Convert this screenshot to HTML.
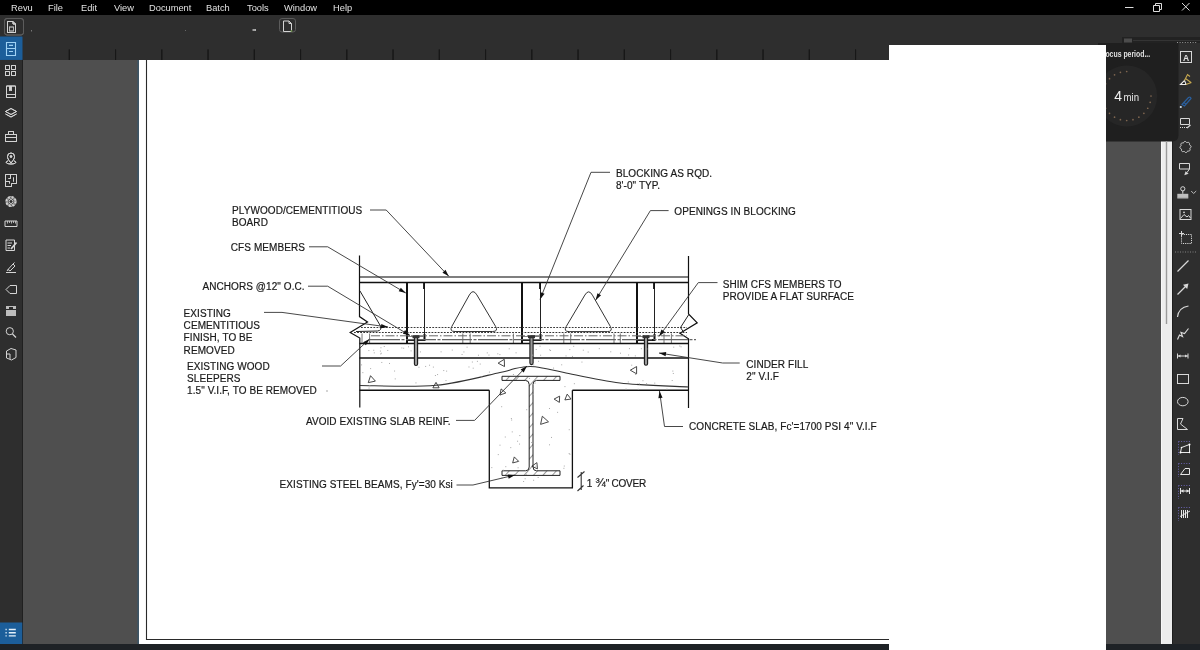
<!DOCTYPE html>
<html><head><meta charset="utf-8">
<style>
*{margin:0;padding:0;box-sizing:border-box}
html,body{width:1200px;height:650px;overflow:hidden;background:#4f4f4f;font-family:"Liberation Sans",sans-serif}
.a{position:absolute}
#menu{left:0;top:0;width:1200px;height:15px;background:#000;color:#e2e2e2;font-size:9.3px}
#menu span{position:absolute;top:3px;line-height:11px}
#tool{left:0;top:15px;width:1200px;height:45px;background:#2e2e2e}
#lside{left:0;top:60px;width:22.5px;height:584px;background:#2e2e2e;border-right:1px solid #202020}
#page{left:139px;top:60px;width:750px;height:584px;background:#fff}
#bot{left:0;top:644px;width:1200px;height:6px;background:#1e2226}
#white{left:889px;top:45px;width:217px;height:605px;background:#fff}
#rtool{left:1172px;top:45px;width:28px;height:599px;background:#2e2e2e;border-left:1px solid #1e1e1e}
#scr{left:1161px;top:141px;width:11px;height:503px;background:#ededed;border-left:1px solid #f8f8f8}
#focus{left:1098px;top:43px;width:81px;height:99px;background:#1f1f1f;border-radius:0 0 7px 0}
#dr{left:0;top:0;will-change:transform}
</style></head><body>
<div class="a" id="tool"></div>
<div class="a" id="lside"></div>
<div class="a" id="page"></div>
<svg class="a" id="dr" width="1200" height="650" viewBox="0 0 1200 650">
<path d="M146.5,60 V639.5 H889" fill="none" stroke="#2a2a2a" stroke-width="1.1"/>
<path d="M359.5,277 H688.5" stroke="#555" stroke-width="1.4"/>
<path d="M359.5,282.5 H688.5" stroke="#111" stroke-width="1.3"/>
<path d="M359.5,255.5 V316.6 L367.5,322 L350.2,332.5 L359.8,338 V407.5" fill="none" stroke="#111" stroke-width="1.2"/>
<path d="M688.5,256 V314 L697.2,322.8 L680,333.2 L688.5,338.8 V408" fill="none" stroke="#111" stroke-width="1.2"/>
<path d="M407,282.5 V343 M407,340 H424.5 V334" fill="none" stroke="#111" stroke-width="2"/>
<path d="M424.5,283 V336" fill="none" stroke="#222" stroke-width="1"/>
<path d="M424,283 V289" fill="none" stroke="#111" stroke-width="1.8"/>
<path d="M408,336.5 H423.5" fill="none" stroke="#666" stroke-width="0.8"/>
<path d="M522,282.5 V343 M522,340 H540.5 V334" fill="none" stroke="#111" stroke-width="2"/>
<path d="M540.5,283 V336" fill="none" stroke="#222" stroke-width="1"/>
<path d="M540,283 V289" fill="none" stroke="#111" stroke-width="1.8"/>
<path d="M523,336.5 H539.5" fill="none" stroke="#666" stroke-width="0.8"/>
<path d="M637,282.5 V343 M637,340 H654.5 V334" fill="none" stroke="#111" stroke-width="2"/>
<path d="M654.5,283 V336" fill="none" stroke="#222" stroke-width="1"/>
<path d="M654,283 V289" fill="none" stroke="#111" stroke-width="1.8"/>
<path d="M638,336.5 H653.5" fill="none" stroke="#666" stroke-width="0.8"/>
<path d="M469.35,294.95 Q473,288.4 476.83,294.85 L495.54,326.34 Q498.6,331.5 492.6,331.5 L455,331.5 Q449,331.5 451.92,326.26 Z" fill="none" stroke="#333" stroke-width="1"/>
<path d="M584.87,295.05 Q588.7,288.6 592.42,295.11 L610.32,326.39 Q613.3,331.6 607.3,331.6 L569.2,331.6 Q563.2,331.6 566.26,326.44 Z" fill="none" stroke="#333" stroke-width="1"/>
<path d="M361,327.5 H687" stroke="#3a3a3a" stroke-width="1" stroke-dasharray="1.8 1.3"/>
<path d="M354,332.5 H687" stroke="#333" stroke-width="1.1" stroke-dasharray="1.8 1.3"/>
<path d="M688.5,315 L680.5,327.5 L683.5,332" fill="none" stroke="#222" stroke-width="1"/>
<path d="M360,291 L380.5,326 Q382,330.5 377.5,331 L356,331.5" fill="none" stroke="#222" stroke-width="1"/>
<path d="M362,333.5 V343" stroke="#777" stroke-width="1"/>
<path d="M369.6,333.5 V343" stroke="#777" stroke-width="1"/>
<path d="M462.8,333.5 V343" stroke="#777" stroke-width="1"/>
<path d="M470.2,333.5 V343" stroke="#777" stroke-width="1"/>
<path d="M513.4,333.5 V343" stroke="#777" stroke-width="1"/>
<path d="M563.8,333.5 V343" stroke="#777" stroke-width="1"/>
<path d="M570.7,333.5 V343" stroke="#777" stroke-width="1"/>
<path d="M614,333.5 V343" stroke="#777" stroke-width="1"/>
<path d="M620.3,333.5 V343" stroke="#777" stroke-width="1"/>
<path d="M664,333.5 V343" stroke="#777" stroke-width="1"/>
<path d="M671.4,333.5 V343" stroke="#777" stroke-width="1"/>
<path d="M371,335.8 H687" stroke="#666" stroke-width="1" stroke-dasharray="9 2 1.5 2"/>
<path d="M370,339.6 H696" stroke="#666" stroke-width="1.2" stroke-dasharray="30 1.5 3 1.5"/>
<path d="M359.5,343.5 H688.5" stroke="#111" stroke-width="1.5"/>
<path d="M359.5,358 H688.5" stroke="#111" stroke-width="1.5"/>
<path d="M359.5,390.2 H489.3 M572.4,390.2 H688.5" stroke="#111" stroke-width="1.4"/>
<path d="M489.3,390.2 V487.8 H572.4 V390.2" fill="none" stroke="#111" stroke-width="1.3"/>
<path d="M359.5,385.5 C372.25,385.47 412.58,387.47 436,385.3 C459.42,383.13 486.83,375.3 500,372.5 C513.17,369.7 510,369.5 515,368.5 C520,367.5 525,366.5 530,366.5 C535,366.5 539.33,367.5 545,368.5 C550.67,369.5 551.5,370.08 564,372.5 C576.5,374.92 599.25,380.58 620,383 C640.75,385.42 677.08,386.33 688.5,387" fill="none" stroke="#333" stroke-width="1.1"/>
<defs><pattern id="h" width="7" height="7" patternUnits="userSpaceOnUse" patternTransform="rotate(42)"><rect width="7" height="7" fill="#fff"/><path d="M0,0 V7" stroke="#555" stroke-width="1.2"/></pattern></defs>
<path d="M502,376.3 H560 V380.4 H536.5 Q533,380.6 533,384.5 V467 Q533,470.8 536.5,470.8 H560 V475.4 H502 V470.8 H525.5 Q529.2,470.8 529.2,467 V384.5 Q529.2,380.6 525.5,380.4 H502 Z" fill="url(#h)" stroke="#222" stroke-width="1" stroke-linejoin="round"/>
<path d="M414.4,336.5 V364 Q414.4,365.5 416,365.5 Q417.6,365.5 417.6,364 V336.5" fill="#9a9a9a" stroke="#1a1a1a" stroke-width="1.1"/>
<rect x="412.5" y="335.2" width="7" height="3" fill="#333"/>
<path d="M529.9,336.5 V363.1 Q529.9,364.6 531.5,364.6 Q533.1,364.6 533.1,363.1 V336.5" fill="#9a9a9a" stroke="#1a1a1a" stroke-width="1.1"/>
<rect x="528" y="335.2" width="7" height="3" fill="#333"/>
<path d="M644.4,336.5 V363.7 Q644.4,365.2 646,365.2 Q647.6,365.2 647.6,363.7 V336.5" fill="#9a9a9a" stroke="#1a1a1a" stroke-width="1.1"/>
<rect x="642.5" y="335.2" width="7" height="3" fill="#333"/>
<polygon points="370.53,375.69 375.39,381.1 368.28,382.61" fill="none" stroke="#333" stroke-width="0.9"/>
<polygon points="436,382.4 439.12,387.8 432.88,387.8" fill="none" stroke="#333" stroke-width="0.9"/>
<polygon points="504.27,359.29 504.53,366.56 498.1,363.15" fill="none" stroke="#333" stroke-width="0.9"/>
<polygon points="501.07,388.92 505.85,392.93 499.99,395.06" fill="none" stroke="#333" stroke-width="0.9"/>
<polygon points="559.61,396.15 559.39,402.38 554.1,399.07" fill="none" stroke="#333" stroke-width="0.9"/>
<polygon points="567.2,394.14 571.04,399.05 564.86,399.92" fill="none" stroke="#333" stroke-width="0.9"/>
<polygon points="542.32,416.23 548.5,421.8 540.59,424.37" fill="none" stroke="#333" stroke-width="0.9"/>
<polygon points="514.27,456.92 518.68,461.33 512.65,462.95" fill="none" stroke="#333" stroke-width="0.9"/>
<polygon points="536.92,462.64 537.46,468.85 531.81,466.21" fill="none" stroke="#333" stroke-width="0.9"/>
<polygon points="636.6,366.56 636.6,373.84 630.3,370.2" fill="none" stroke="#333" stroke-width="0.9"/>
<rect x="466.57" y="346.66" width="1" height="1" fill="#aaa"/>
<rect x="573.2" y="345.8" width="1" height="1" fill="#aaa"/>
<rect x="535.7" y="349.02" width="1" height="1" fill="#aaa"/>
<rect x="379.91" y="350.58" width="1" height="1" fill="#aaa"/>
<rect x="373.22" y="349.77" width="1" height="1" fill="#aaa"/>
<rect x="383.77" y="346" width="1" height="1" fill="#aaa"/>
<rect x="499.39" y="354.1" width="1" height="1" fill="#aaa"/>
<rect x="401.36" y="347.46" width="1" height="1" fill="#aaa"/>
<rect x="565.54" y="355.42" width="1" height="1" fill="#aaa"/>
<rect x="549.14" y="349.36" width="1" height="1" fill="#aaa"/>
<rect x="679.26" y="345.51" width="1" height="1" fill="#aaa"/>
<rect x="640.86" y="348.19" width="1" height="1" fill="#aaa"/>
<rect x="408.03" y="346.3" width="1" height="1" fill="#aaa"/>
<rect x="461.57" y="353.98" width="1" height="1" fill="#aaa"/>
<rect x="419.92" y="351.4" width="1" height="1" fill="#aaa"/>
<rect x="569.29" y="349.1" width="1" height="1" fill="#aaa"/>
<rect x="539.56" y="345.69" width="1" height="1" fill="#aaa"/>
<rect x="380.43" y="347.27" width="1" height="1" fill="#aaa"/>
<rect x="582.81" y="349.7" width="1" height="1" fill="#aaa"/>
<rect x="463.41" y="351.44" width="1" height="1" fill="#aaa"/>
<rect x="508.74" y="348.3" width="1" height="1" fill="#aaa"/>
<rect x="619.97" y="352.69" width="1" height="1" fill="#aaa"/>
<rect x="440.58" y="351.32" width="1" height="1" fill="#aaa"/>
<rect x="532.21" y="354.63" width="1" height="1" fill="#aaa"/>
<rect x="598.8" y="348.17" width="1" height="1" fill="#aaa"/>
<rect x="680.54" y="346.3" width="1" height="1" fill="#aaa"/>
<rect x="497.31" y="353.33" width="1" height="1" fill="#aaa"/>
<rect x="410.55" y="350.38" width="1" height="1" fill="#aaa"/>
<rect x="373.78" y="352.35" width="1" height="1" fill="#aaa"/>
<rect x="610.25" y="351.3" width="1" height="1" fill="#aaa"/>
<rect x="646.41" y="348.45" width="1" height="1" fill="#aaa"/>
<rect x="587.67" y="351.54" width="1" height="1" fill="#aaa"/>
<rect x="550.05" y="350.02" width="1" height="1" fill="#aaa"/>
<rect x="634.83" y="355.39" width="1" height="1" fill="#aaa"/>
<rect x="515.56" y="352.31" width="1" height="1" fill="#aaa"/>
<rect x="380.78" y="352.72" width="1" height="1" fill="#aaa"/>
<rect x="571.96" y="355.92" width="1" height="1" fill="#aaa"/>
<rect x="628.95" y="348.13" width="1" height="1" fill="#aaa"/>
<rect x="486.77" y="352.36" width="1" height="1" fill="#aaa"/>
<rect x="368.36" y="350.08" width="1" height="1" fill="#aaa"/>
<rect x="415.78" y="346.29" width="1" height="1" fill="#aaa"/>
<rect x="380.22" y="353.45" width="1" height="1" fill="#aaa"/>
<rect x="403.16" y="347.72" width="1" height="1" fill="#aaa"/>
<rect x="488.45" y="354.59" width="1" height="1" fill="#aaa"/>
<rect x="387.27" y="349.94" width="1" height="1" fill="#aaa"/>
<rect x="540.12" y="354.72" width="1" height="1" fill="#aaa"/>
<rect x="628.09" y="354.5" width="1" height="1" fill="#aaa"/>
<rect x="451.77" y="349.57" width="1" height="1" fill="#aaa"/>
<rect x="477.96" y="354.73" width="1" height="1" fill="#aaa"/>
<rect x="673.22" y="346.66" width="1" height="1" fill="#aaa"/>
<rect x="418.45" y="366.73" width="1" height="1" fill="#aaa"/>
<rect x="437.07" y="374.06" width="1" height="1" fill="#aaa"/>
<rect x="553.05" y="367.62" width="1" height="1" fill="#aaa"/>
<rect x="362.33" y="372.15" width="1" height="1" fill="#aaa"/>
<rect x="481.38" y="376.42" width="1" height="1" fill="#aaa"/>
<rect x="671.71" y="380.02" width="1" height="1" fill="#aaa"/>
<rect x="529.05" y="377.91" width="1" height="1" fill="#aaa"/>
<rect x="581.44" y="361.57" width="1" height="1" fill="#aaa"/>
<rect x="654.25" y="382.62" width="1" height="1" fill="#aaa"/>
<rect x="646.09" y="383.14" width="1" height="1" fill="#aaa"/>
<rect x="488.92" y="371.57" width="1" height="1" fill="#aaa"/>
<rect x="394.75" y="378.39" width="1" height="1" fill="#aaa"/>
<rect x="381.29" y="361.95" width="1" height="1" fill="#aaa"/>
<rect x="429.06" y="364.71" width="1" height="1" fill="#aaa"/>
<rect x="471.86" y="361.52" width="1" height="1" fill="#aaa"/>
<rect x="361.08" y="364.39" width="1" height="1" fill="#aaa"/>
<rect x="394.08" y="370.54" width="1" height="1" fill="#aaa"/>
<rect x="369.31" y="385.36" width="1" height="1" fill="#aaa"/>
<rect x="561.19" y="364.31" width="1" height="1" fill="#aaa"/>
<rect x="443.24" y="370.07" width="1" height="1" fill="#aaa"/>
<rect x="479.72" y="363.56" width="1" height="1" fill="#aaa"/>
<rect x="637.75" y="388.8" width="1" height="1" fill="#aaa"/>
<rect x="512.91" y="374.03" width="1" height="1" fill="#aaa"/>
<rect x="389" y="362.96" width="1" height="1" fill="#aaa"/>
<rect x="472.7" y="367.68" width="1" height="1" fill="#aaa"/>
<rect x="631.21" y="364.68" width="1" height="1" fill="#aaa"/>
<rect x="368.53" y="387.58" width="1" height="1" fill="#aaa"/>
<rect x="533.21" y="364.25" width="1" height="1" fill="#aaa"/>
<rect x="538.07" y="360.78" width="1" height="1" fill="#aaa"/>
<rect x="533.16" y="388.38" width="1" height="1" fill="#aaa"/>
<rect x="642.44" y="380.19" width="1" height="1" fill="#aaa"/>
<rect x="446.12" y="370.63" width="1" height="1" fill="#aaa"/>
<rect x="415.46" y="382.39" width="1" height="1" fill="#aaa"/>
<rect x="534.63" y="382.59" width="1" height="1" fill="#aaa"/>
<rect x="468.47" y="366.47" width="1" height="1" fill="#aaa"/>
<rect x="625.55" y="388.56" width="1" height="1" fill="#aaa"/>
<rect x="638.96" y="383.38" width="1" height="1" fill="#aaa"/>
<rect x="627.78" y="381.46" width="1" height="1" fill="#aaa"/>
<rect x="434.92" y="375.01" width="1" height="1" fill="#aaa"/>
<rect x="476.91" y="360.84" width="1" height="1" fill="#aaa"/>
<rect x="370.11" y="368.1" width="1" height="1" fill="#aaa"/>
<rect x="445.49" y="380.08" width="1" height="1" fill="#aaa"/>
<rect x="672.82" y="372.97" width="1" height="1" fill="#aaa"/>
<rect x="666.47" y="388.65" width="1" height="1" fill="#aaa"/>
<rect x="672.33" y="370.57" width="1" height="1" fill="#aaa"/>
<rect x="432.87" y="366.58" width="1" height="1" fill="#aaa"/>
<rect x="425.13" y="365.93" width="1" height="1" fill="#aaa"/>
<rect x="564.45" y="386.11" width="1" height="1" fill="#aaa"/>
<rect x="634.98" y="373.9" width="1" height="1" fill="#aaa"/>
<rect x="573.87" y="383.19" width="1" height="1" fill="#aaa"/>
<rect x="497.78" y="454.1" width="1" height="1" fill="#aaa"/>
<rect x="563.78" y="465.54" width="1" height="1" fill="#aaa"/>
<rect x="551.01" y="436.94" width="1" height="1" fill="#aaa"/>
<rect x="505.28" y="466.18" width="1" height="1" fill="#aaa"/>
<rect x="517.6" y="467.28" width="1" height="1" fill="#aaa"/>
<rect x="568.73" y="429.21" width="1" height="1" fill="#aaa"/>
<rect x="523.11" y="481" width="1" height="1" fill="#aaa"/>
<rect x="548.98" y="407.98" width="1" height="1" fill="#aaa"/>
<rect x="501.16" y="406.21" width="1" height="1" fill="#aaa"/>
<rect x="563.39" y="467.81" width="1" height="1" fill="#aaa"/>
<rect x="502.69" y="469.69" width="1" height="1" fill="#aaa"/>
<rect x="569.42" y="453.78" width="1" height="1" fill="#aaa"/>
<rect x="519.03" y="443.57" width="1" height="1" fill="#aaa"/>
<rect x="501.48" y="393.34" width="1" height="1" fill="#aaa"/>
<rect x="568.67" y="453.07" width="1" height="1" fill="#aaa"/>
<rect x="533.13" y="479.76" width="1" height="1" fill="#aaa"/>
<rect x="525.7" y="473.94" width="1" height="1" fill="#aaa"/>
<rect x="557.09" y="411.84" width="1" height="1" fill="#aaa"/>
<rect x="511.15" y="419.54" width="1" height="1" fill="#aaa"/>
<rect x="510.24" y="447.13" width="1" height="1" fill="#aaa"/>
<rect x="511.75" y="431.39" width="1" height="1" fill="#aaa"/>
<rect x="501.49" y="477.54" width="1" height="1" fill="#aaa"/>
<rect x="519.3" y="435.07" width="1" height="1" fill="#aaa"/>
<rect x="537.67" y="477" width="1" height="1" fill="#aaa"/>
<rect x="524.65" y="478.27" width="1" height="1" fill="#aaa"/>
<rect x="531.13" y="441.99" width="1" height="1" fill="#aaa"/>
<rect x="532.88" y="393.76" width="1" height="1" fill="#aaa"/>
<rect x="526.21" y="409.21" width="1" height="1" fill="#aaa"/>
<rect x="491.31" y="467.12" width="1" height="1" fill="#aaa"/>
<rect x="504.79" y="436.51" width="1" height="1" fill="#aaa"/>
<rect x="549.02" y="444.31" width="1" height="1" fill="#aaa"/>
<rect x="517.08" y="440.72" width="1" height="1" fill="#aaa"/>
<rect x="535.44" y="465.72" width="1" height="1" fill="#aaa"/>
<rect x="499.49" y="444.67" width="1" height="1" fill="#aaa"/>
<rect x="510.88" y="418.03" width="1" height="1" fill="#aaa"/>
<path d="M370,210 L386.2,210 L448.8,276.3" fill="none" stroke="#333" stroke-width="0.9"/>
<polygon points="448.8,276.3 442.47,272.65 445.52,269.77" fill="#111"/>
<path d="M309,246.8 L327.7,246.8 L405.8,293" fill="none" stroke="#333" stroke-width="0.9"/>
<polygon points="405.8,293 398.71,291.24 400.84,287.63" fill="#111"/>
<path d="M308,286.2 L327.7,286.2 L410,335.5" fill="none" stroke="#333" stroke-width="0.9"/>
<polygon points="410,335.5 402.92,333.7 405.07,330.1" fill="#111"/>
<path d="M264,312.4 L282,312.4 L388,327" fill="none" stroke="#333" stroke-width="0.9"/>
<polygon points="388,327 380.78,328.13 381.35,323.96" fill="#111"/>
<path d="M322,366 L340.6,366 L369.6,339" fill="none" stroke="#333" stroke-width="0.9"/>
<polygon points="369.6,339 365.91,345.31 363.05,342.23" fill="#111"/>
<path d="M610,172.3 L591,172.3 L540,299.5" fill="none" stroke="#333" stroke-width="0.9"/>
<polygon points="540,299.5 540.66,292.22 544.55,293.78" fill="#111"/>
<path d="M668.6,210.6 L650.4,210.6 L595.6,300.2" fill="none" stroke="#333" stroke-width="0.9"/>
<polygon points="595.6,300.2 597.46,293.13 601.04,295.32" fill="#111"/>
<path d="M717.5,282.6 L698.3,282.6 L659,336.5" fill="none" stroke="#333" stroke-width="0.9"/>
<polygon points="659,336.5 661.43,329.61 664.82,332.08" fill="#111"/>
<path d="M739.7,363 L722.7,363 L659,353" fill="none" stroke="#333" stroke-width="0.9"/>
<polygon points="659,353 666.24,352.01 665.59,356.16" fill="#111"/>
<path d="M683,426.5 L664.5,426.5 L659.5,391" fill="none" stroke="#333" stroke-width="0.9"/>
<polygon points="659.5,391 662.56,397.64 658.4,398.22" fill="#111"/>
<path d="M456,420.4 L474.6,420.4 L527,366" fill="none" stroke="#333" stroke-width="0.9"/>
<polygon points="527,366 523.66,372.5 520.63,369.58" fill="#111"/>
<path d="M456.5,485 L473,485 L515,475" fill="none" stroke="#333" stroke-width="0.9"/>
<polygon points="515,475 508.68,478.66 507.7,474.58" fill="#111"/>
<path d="M581.2,472 V490 M577.5,477.5 L584.5,471.5 M577.5,491 L583.5,485.5" fill="none" stroke="#333" stroke-width="1.1"/>
<g font-family="Liberation Sans" font-size="10" letter-spacing="0.08" fill="#1a1a1a" stroke="#1a1a1a" stroke-width="0.2"><text x="232" y="214.3">PLYWOOD/CEMENTITIOUS</text><text x="232" y="226.4">BOARD</text><text x="230.8" y="251.1">CFS MEMBERS</text><text x="202.4" y="289.6">ANCHORS @12&quot; O.C.</text><text x="183.6" y="317">EXISTING</text><text x="183.6" y="329.2">CEMENTITIOUS</text><text x="183.6" y="341.4">FINISH, TO BE</text><text x="183.6" y="353.6">REMOVED</text><text x="187" y="369.6">EXISTING WOOD</text><text x="187" y="381.8">SLEEPERS</text><text x="187" y="394">1.5&quot; V.I.F, TO BE REMOVED</text><text x="615.9" y="177.1">BLOCKING AS RQD.</text><text x="615.9" y="189.2">8'-0&quot; TYP.</text><text x="674.3" y="215">OPENINGS IN BLOCKING</text><text x="722.7" y="287.6">SHIM CFS MEMBERS TO</text><text x="722.7" y="300.1">PROVIDE A FLAT SURFACE</text><text x="746.3" y="367.6">CINDER FILL</text><text x="746.3" y="379.8">2&quot; V.I.F</text><text x="689" y="429.6">CONCRETE SLAB, Fc'=1700 PSI 4&quot; V.I.F</text><text x="305.9" y="424.9">AVOID EXISTING SLAB REINF.</text><text x="279.6" y="488.4">EXISTING STEEL BEAMS, Fy'=30 Ksi</text><text x="586.8" y="487">1 <tspan font-size="12.5" letter-spacing="0">&#190;</tspan><tspan letter-spacing="-0.25">&quot; COVER</tspan></text></g>
<rect x="326.5" y="390.5" width="1" height="1" fill="#555"/>
</svg>
<div class="a" id="bot"></div>
<div class="a" id="scr"></div>
<div class="a" id="rtool"></div>
<svg class="a" style="left:0;top:0" width="1200" height="650" viewBox="0 0 1200 650"><path d="M1098,43 H1178.5 V135 Q1178.5,141.5 1172,141.5 H1098 Z" fill="#1f1f1f"/>
<text x="1150.2" y="57" font-family="Liberation Sans" font-size="8.6" font-weight="bold" fill="#e0e0e0" text-anchor="end" textLength="49" lengthAdjust="spacingAndGlyphs">Focus period...</text>
<circle cx="1126.7" cy="96" r="30.5" fill="#262626"/>
<circle cx="1151" cy="96" r="0.85" fill="#7f6650"/>
<circle cx="1150.17" cy="102.34" r="0.85" fill="#7f6650"/>
<circle cx="1147.74" cy="108.25" r="0.85" fill="#7f6650"/>
<circle cx="1143.88" cy="113.32" r="0.85" fill="#7f6650"/>
<circle cx="1138.85" cy="117.22" r="0.85" fill="#7f6650"/>
<circle cx="1132.99" cy="119.67" r="0.85" fill="#7f6650"/>
<circle cx="1126.7" cy="120.5" r="0.85" fill="#7f6650"/>
<circle cx="1120.41" cy="119.67" r="0.85" fill="#7f6650"/>
<circle cx="1114.55" cy="117.22" r="0.85" fill="#7f6650"/>
<circle cx="1109.52" cy="113.32" r="0.85" fill="#7f6650"/>
<circle cx="1105.66" cy="108.25" r="0.85" fill="#7f6650"/>
<circle cx="1103.23" cy="102.34" r="0.85" fill="#7f6650"/>
<circle cx="1102.4" cy="96" r="0.85" fill="#7f6650"/>
<circle cx="1103.23" cy="89.66" r="0.85" fill="#7f6650"/>
<circle cx="1105.66" cy="83.75" r="0.85" fill="#7f6650"/>
<circle cx="1109.52" cy="78.68" r="0.85" fill="#7f6650"/>
<circle cx="1114.55" cy="74.78" r="0.85" fill="#7f6650"/>
<circle cx="1120.41" cy="72.33" r="0.85" fill="#7f6650"/>
<circle cx="1126.7" cy="71.5" r="0.85" fill="#7f6650"/>
<text x="1114.3" y="100.5" font-family="Liberation Sans" font-size="14" fill="#f2f2f2">4</text>
<text x="1123.5" y="100.5" font-family="Liberation Sans" font-size="11" fill="#e6e6e6" textLength="15.5" lengthAdjust="spacingAndGlyphs">min</text></svg>
<div class="a" id="white"></div>
<svg class="a" style="left:0;top:0;z-index:5" width="1200" height="650" viewBox="0 0 1200 650"><path d="M69.3,49.5 V60" stroke="#181818" stroke-width="1"/>
<path d="M115.55,49.5 V60" stroke="#181818" stroke-width="1"/>
<path d="M161.8,49.5 V60" stroke="#181818" stroke-width="1"/>
<path d="M208.05,49.5 V60" stroke="#181818" stroke-width="1"/>
<path d="M254.3,49.5 V60" stroke="#181818" stroke-width="1"/>
<path d="M300.55,49.5 V60" stroke="#181818" stroke-width="1"/>
<path d="M346.8,49.5 V60" stroke="#181818" stroke-width="1"/>
<path d="M393.05,49.5 V60" stroke="#181818" stroke-width="1"/>
<path d="M439.3,49.5 V60" stroke="#181818" stroke-width="1"/>
<path d="M485.55,49.5 V60" stroke="#181818" stroke-width="1"/>
<path d="M531.8,49.5 V60" stroke="#181818" stroke-width="1"/>
<path d="M578.05,49.5 V60" stroke="#181818" stroke-width="1"/>
<path d="M624.3,49.5 V60" stroke="#181818" stroke-width="1"/>
<path d="M670.55,49.5 V60" stroke="#181818" stroke-width="1"/>
<path d="M716.8,49.5 V60" stroke="#181818" stroke-width="1"/>
<path d="M763.05,49.5 V60" stroke="#181818" stroke-width="1"/>
<path d="M809.3,49.5 V60" stroke="#181818" stroke-width="1"/>
<path d="M855.55,49.5 V60" stroke="#181818" stroke-width="1"/>
<rect x="137.6" y="60" width="1.4" height="584" fill="#3d5566"/>
<rect x="4.5" y="18.5" width="19" height="16.5" rx="2.5" fill="none" stroke="#5c5c5c" stroke-width="1"/>
<path d="M7.5,21.5 H13 L15.5,24 V32.5 H7.5 Z M13,21.5 V24 H15.5" fill="none" stroke="#d4d4d4" stroke-width="1"/>
<rect x="9.5" y="27" width="4" height="4" fill="none" stroke="#bbb" stroke-width="0.8"/>
<rect x="0" y="36.7" width="22.3" height="23.1" fill="#1c5e9a"/>
<path d="M6.5,42.5 H15.5 V55.5 H6.5 Z M6.5,48.5 H15.5" fill="none" stroke="#9fd2f5" stroke-width="1.1"/>
<path d="M9,45.3 H13 M9,51.5 H13" stroke="#9fd2f5" stroke-width="1.2"/>
<path d="M5.5,65.5 h4 v4 h-4 Z M11.5,65.5 h4 v4 h-4 Z M5.5,71.5 h4 v4 h-4 Z M11.5,71.5 h4 v4 h-4 Z" fill="none" stroke="#d4d4d4" stroke-width="1"/>
<path d="M6.5,86 H15.5 V97.5 H6.5 Z M6.5,94.5 H15.5" fill="none" stroke="#d4d4d4" stroke-width="1"/><path d="M9.5,86 V91 L10.5,90 L11.5,91 V86" fill="#d4d4d4" stroke="#d4d4d4" stroke-width="0.6"/>
<path d="M11,108.5 L16.5,111.5 L11,114.5 L5.5,111.5 Z M5.5,114 L11,117 L16.5,114" fill="none" stroke="#d4d4d4" stroke-width="1"/>
<path d="M5.5,134.5 H16.5 V141.5 H5.5 Z M8.5,134.5 V131.5 H13.5 V134.5 M5.5,137.5 H16.5" fill="none" stroke="#d4d4d4" stroke-width="1"/>
<path d="M11,163 C8,159.5 7.5,158 7.5,156.5 A3.5,3.5 0 0 1 14.5,156.5 C14.5,158 14,159.5 11,163 Z M8,161 C5,161.5 5.5,164 11,164 C16.5,164 17,161.5 14,161" fill="none" stroke="#d4d4d4" stroke-width="1"/><circle cx="11" cy="156.5" r="1.2" fill="#d4d4d4"/>
<path d="M5.5,174.5 H16.5 V183.5 H11.5 V186.5 H5.5 Z M10.5,174.5 V178.5 H8.5 M13.5,177.5 V181.5 M5.5,181.5 H9.5 V183.5" fill="none" stroke="#d4d4d4" stroke-width="1"/>
<polygon points="15.92,201.5 15.76,201.81 15.53,202.1 15.24,202.34 14.91,202.55 14.83,202.8 14.99,203.15 15.1,203.52 15.13,203.89 15.09,204.23 14.96,204.54 14.75,204.79 14.48,204.98 14.15,205.09 13.78,205.13 13.4,205.09 13.02,205 12.79,205.13 12.65,205.49 12.47,205.83 12.24,206.11 11.96,206.32 11.65,206.45 11.33,206.48 11,206.42 10.69,206.26 10.4,206.03 10.16,205.74 9.95,205.41 9.7,205.33 9.35,205.49 8.98,205.6 8.61,205.63 8.27,205.59 7.96,205.46 7.71,205.25 7.52,204.98 7.41,204.65 7.37,204.28 7.41,203.9 7.5,203.52 7.37,203.29 7.01,203.15 6.67,202.97 6.39,202.74 6.18,202.46 6.05,202.15 6.02,201.83 6.08,201.5 6.24,201.19 6.47,200.9 6.76,200.66 7.09,200.45 7.17,200.2 7.01,199.85 6.9,199.48 6.87,199.11 6.91,198.77 7.04,198.46 7.25,198.21 7.52,198.02 7.85,197.91 8.22,197.87 8.6,197.91 8.98,198 9.21,197.87 9.35,197.51 9.53,197.17 9.76,196.89 10.04,196.68 10.35,196.55 10.67,196.52 11,196.58 11.31,196.74 11.6,196.97 11.84,197.26 12.05,197.59 12.3,197.67 12.65,197.51 13.02,197.4 13.39,197.37 13.73,197.41 14.04,197.54 14.29,197.75 14.48,198.02 14.59,198.35 14.63,198.72 14.59,199.1 14.5,199.48 14.63,199.71 14.99,199.85 15.33,200.03 15.61,200.26 15.82,200.54 15.95,200.85 15.98,201.17 15.92,201.5" fill="none" stroke="#d4d4d4" stroke-width="1"/>
<circle cx="11" cy="201.5" r="2" fill="none" stroke="#d4d4d4" stroke-width="1"/>
<path d="M69.3,49.5 V60" stroke="#181818" stroke-width="1"/>
<path d="M115.55,49.5 V60" stroke="#181818" stroke-width="1"/>
<path d="M161.8,49.5 V60" stroke="#181818" stroke-width="1"/>
<path d="M208.05,49.5 V60" stroke="#181818" stroke-width="1"/>
<path d="M254.3,49.5 V60" stroke="#181818" stroke-width="1"/>
<path d="M300.55,49.5 V60" stroke="#181818" stroke-width="1"/>
<path d="M346.8,49.5 V60" stroke="#181818" stroke-width="1"/>
<path d="M393.05,49.5 V60" stroke="#181818" stroke-width="1"/>
<path d="M439.3,49.5 V60" stroke="#181818" stroke-width="1"/>
<path d="M485.55,49.5 V60" stroke="#181818" stroke-width="1"/>
<path d="M531.8,49.5 V60" stroke="#181818" stroke-width="1"/>
<path d="M578.05,49.5 V60" stroke="#181818" stroke-width="1"/>
<path d="M624.3,49.5 V60" stroke="#181818" stroke-width="1"/>
<path d="M670.55,49.5 V60" stroke="#181818" stroke-width="1"/>
<path d="M716.8,49.5 V60" stroke="#181818" stroke-width="1"/>
<path d="M763.05,49.5 V60" stroke="#181818" stroke-width="1"/>
<path d="M809.3,49.5 V60" stroke="#181818" stroke-width="1"/>
<path d="M855.55,49.5 V60" stroke="#181818" stroke-width="1"/>
<rect x="137.6" y="60" width="1.4" height="584" fill="#3d5566"/>
<rect x="4.5" y="18.5" width="19" height="16.5" rx="2.5" fill="none" stroke="#5c5c5c" stroke-width="1"/>
<path d="M7.5,21.5 H13 L15.5,24 V32.5 H7.5 Z M13,21.5 V24 H15.5" fill="none" stroke="#d4d4d4" stroke-width="1"/>
<rect x="9.5" y="27" width="4" height="4" fill="none" stroke="#bbb" stroke-width="0.8"/>
<rect x="0" y="36.7" width="22.3" height="23.1" fill="#1c5e9a"/>
<path d="M6.5,42.5 H15.5 V55.5 H6.5 Z M6.5,48.5 H15.5" fill="none" stroke="#9fd2f5" stroke-width="1.1"/>
<path d="M9,45.3 H13 M9,51.5 H13" stroke="#9fd2f5" stroke-width="1.2"/>
<path d="M5.5,65.5 h4 v4 h-4 Z M11.5,65.5 h4 v4 h-4 Z M5.5,71.5 h4 v4 h-4 Z M11.5,71.5 h4 v4 h-4 Z" fill="none" stroke="#d4d4d4" stroke-width="1"/>
<path d="M6.5,86 H15.5 V97.5 H6.5 Z M6.5,94.5 H15.5" fill="none" stroke="#d4d4d4" stroke-width="1"/><path d="M9.5,86 V91 L10.5,90 L11.5,91 V86" fill="#d4d4d4" stroke="#d4d4d4" stroke-width="0.6"/>
<path d="M11,108.5 L16.5,111.5 L11,114.5 L5.5,111.5 Z M5.5,114 L11,117 L16.5,114" fill="none" stroke="#d4d4d4" stroke-width="1"/>
<path d="M5.5,134.5 H16.5 V141.5 H5.5 Z M8.5,134.5 V131.5 H13.5 V134.5 M5.5,137.5 H16.5" fill="none" stroke="#d4d4d4" stroke-width="1"/>
<path d="M11,163 C8,159.5 7.5,158 7.5,156.5 A3.5,3.5 0 0 1 14.5,156.5 C14.5,158 14,159.5 11,163 Z M8,161 C5,161.5 5.5,164 11,164 C16.5,164 17,161.5 14,161" fill="none" stroke="#d4d4d4" stroke-width="1"/><circle cx="11" cy="156.5" r="1.2" fill="#d4d4d4"/>
<path d="M5.5,174.5 H16.5 V183.5 H11.5 V186.5 H5.5 Z M10.5,174.5 V178.5 H8.5 M13.5,177.5 V181.5 M5.5,181.5 H9.5 V183.5" fill="none" stroke="#d4d4d4" stroke-width="1"/>
<circle cx="11" cy="201.5" r="4.8" fill="none" stroke="#d4d4d4" stroke-width="1.6" stroke-dasharray="2 1.77"/>
<circle cx="11" cy="201.5" r="3.6" fill="none" stroke="#d4d4d4" stroke-width="0.9"/>
<path d="M5,221 H17 V226.5 H5 Z" fill="none" stroke="#d4d4d4" stroke-width="1"/><path d="M7.5,221 V223.5 M9.5,221 V223 M11.5,221 V223.5 M13.5,221 V223 M15.5,221 V223.5" stroke="#d4d4d4" stroke-width="0.8"/>
<path d="M6,240 H14.5 V250.5 H6 Z M7.5,243 H12 M7.5,245.5 H11 M7.5,248 H10" fill="none" stroke="#d4d4d4" stroke-width="1"/><path d="M11,249 L16.5,242.5" stroke="#d4d4d4" stroke-width="1.8"/>
<path d="M6,272.5 H16" fill="none" stroke="#d4d4d4" stroke-width="1"/><path d="M8,269.5 L13,264 L15,266 L10,271 Z M13,264 L14.5,262.5 M7,271 L8.5,269" fill="none" stroke="#d4d4d4" stroke-width="1"/>
<path d="M16.5,285.5 H10 L6,289.5 L10,293.5 H16.5 Z" fill="none" stroke="#d4d4d4" stroke-width="1"/>
<path d="M6,306 H16 V316 H6 Z" fill="#bdbdbd"/><path d="M6,309.5 H16" stroke="#2b2b2b" stroke-width="1"/><rect x="9" y="307" width="4" height="2" fill="#2b2b2b"/>
<circle cx="9.8" cy="331.2" r="3.6" fill="none" stroke="#d4d4d4" stroke-width="1"/><path d="M12.5,334 L16,337.5" stroke="#d4d4d4" stroke-width="1.3"/>
<path d="M6.5,351 L11,348.5 L16,350 V357.5 L11.5,360 L6.5,358 Z M6.5,354 H10 V359" fill="none" stroke="#d4d4d4" stroke-width="1"/>
<rect x="0" y="622.5" width="22.3" height="21.5" fill="#1c5e9a"/>
<path d="M8.8,629.5 H15.8 M8.8,632.7 H15.8 M8.8,635.9 H15.8 M5.5,629.5 H6.7 M5.5,632.7 H6.7 M5.5,635.9 H6.7" stroke="#e6f2fb" stroke-width="1.4"/>
<rect x="279.5" y="18.5" width="16" height="13.5" rx="2.5" fill="none" stroke="#5c5c5c" stroke-width="1"/>
<path d="M283.5,21 H289 L291.5,23.5 V31.5 H283.5 Z M289,21 V23.5 H291.5" fill="none" stroke="#d4d4d4" stroke-width="1"/><circle cx="291.5" cy="31" r="1" fill="#6a8a4a"/>
<path d="M252.5,30 H256" stroke="#ddd" stroke-width="1.3"/>
<rect x="31" y="30" width="1" height="1.5" fill="#777"/><rect x="185" y="30" width="1" height="1" fill="#666"/>
<path d="M1125,7.5 H1133.5" stroke="#ddd" stroke-width="1"/>
<path d="M1153.5,5.5 H1159.5 V11.5 H1153.5 Z M1155.5,5.5 V3.5 H1161.5 V9.5 H1159.5" fill="none" stroke="#ddd" stroke-width="1"/>
<path d="M1182,3 L1189.5,10.5 M1189.5,3 L1182,10.5" stroke="#ddd" stroke-width="1"/>
<rect x="1122" y="37" width="78" height="6" fill="#222"/><rect x="1124" y="38.5" width="8" height="4" fill="#4c4c4c"/>
<path d="M1133,40.5 H1200" stroke="#383838" stroke-width="0.8"/>
<path d="M1177,42.5 H1197" stroke="#9a9a9a" stroke-width="1" stroke-dasharray="1 1.6"/>
<rect x="1165.8" y="141" width="1.4" height="183" fill="#9a9a9a"/>
<rect x="1180.5" y="51.5" width="11" height="11" fill="none" stroke="#d8d8d8" stroke-width="1"/><text x="1186" y="60.5" font-family="Liberation Sans" font-size="8.5" font-weight="bold" fill="#e0e0e0" text-anchor="middle">A</text>
<path d="M1180.5,84.5 L1184.5,80.5 L1186,84.5 Z" fill="#111" stroke="#e8e8e8" stroke-width="1.1"/>
<path d="M1184.5,80.5 L1187.5,74.5 L1190,76.5 M1185.5,78.5 L1191,82.5 M1186,84.5 L1191.5,82.5" fill="none" stroke="#c8aa50" stroke-width="1.1"/>
<path d="M1182,104.5 L1188.5,97.5 Q1190.5,96.5 1191,98.5 L1184.5,106 Z M1184,102.5 L1186.5,104.5" fill="none" stroke="#2a5f9e" stroke-width="1.2"/><circle cx="1180.8" cy="107" r="1.1" fill="#cfe0f0"/>
<path d="M1180.5,118.5 H1189.5 V124.5 H1180.5 Z" fill="none" stroke="#d8d8d8" stroke-width="1"/><path d="M1180,127.5 H1188" stroke="#d8d8d8" stroke-width="1" stroke-dasharray="1 1"/><path d="M1187,128 L1190.5,125" stroke="#d8d8d8" stroke-width="1.2"/>
<polygon points="1191.01,147 1190.84,147.35 1190.59,147.67 1190.27,147.95 1189.9,148.18 1189.81,148.46 1189.99,148.86 1190.1,149.27 1190.13,149.68 1190.08,150.06 1189.93,150.4 1189.7,150.69 1189.4,150.9 1189.03,151.02 1188.62,151.07 1188.2,151.04 1187.78,150.95 1187.52,151.09 1187.36,151.49 1187.15,151.86 1186.89,152.17 1186.57,152.4 1186.23,152.54 1185.87,152.58 1185.5,152.51 1185.15,152.34 1184.83,152.09 1184.55,151.77 1184.32,151.4 1184.04,151.31 1183.64,151.49 1183.23,151.6 1182.82,151.63 1182.44,151.58 1182.1,151.43 1181.81,151.2 1181.6,150.9 1181.48,150.53 1181.43,150.12 1181.46,149.7 1181.55,149.28 1181.41,149.02 1181.01,148.86 1180.64,148.65 1180.33,148.39 1180.1,148.07 1179.96,147.73 1179.92,147.37 1179.99,147 1180.16,146.65 1180.41,146.33 1180.73,146.05 1181.1,145.82 1181.19,145.54 1181.01,145.14 1180.9,144.73 1180.87,144.32 1180.92,143.94 1181.07,143.6 1181.3,143.31 1181.6,143.1 1181.97,142.98 1182.38,142.93 1182.8,142.96 1183.22,143.05 1183.48,142.91 1183.64,142.51 1183.85,142.14 1184.11,141.83 1184.43,141.6 1184.77,141.46 1185.13,141.42 1185.5,141.49 1185.85,141.66 1186.17,141.91 1186.45,142.23 1186.68,142.6 1186.96,142.69 1187.36,142.51 1187.77,142.4 1188.18,142.37 1188.56,142.42 1188.9,142.57 1189.19,142.8 1189.4,143.1 1189.52,143.47 1189.57,143.88 1189.54,144.3 1189.45,144.72 1189.59,144.98 1189.99,145.14 1190.36,145.35 1190.67,145.61 1190.9,145.93 1191.04,146.27 1191.08,146.63 1191.01,147" fill="none" stroke="#d8d8d8" stroke-width="1"/>
<path d="M1179.5,163.5 H1189.5 V169 H1179.5 Z M1189.5,169 L1187,172.5" fill="none" stroke="#d8d8d8" stroke-width="1"/><path d="M1184.3,175.3 L1185.6,171.2 L1188.6,173.8 Z" fill="#d8d8d8"/>
<circle cx="1182.8" cy="188.8" r="2.1" fill="none" stroke="#d8d8d8" stroke-width="1"/><path d="M1182.8,191 V193.8" fill="none" stroke="#d8d8d8" stroke-width="1"/><rect x="1177.3" y="193.8" width="11" height="3.6" fill="#bdbdbd"/><path d="M1177.3,197.9 H1188.3" stroke="#e0e0e0" stroke-width="1"/><path d="M1191.2,191 L1193.6,193.5 L1196.2,191" fill="none" stroke="#c8c8c8" stroke-width="0.9"/>
<rect x="1180" y="209.5" width="11" height="10" fill="none" stroke="#d8d8d8" stroke-width="1"/><path d="M1180.5,218.5 L1184,214.5 L1187,217 L1188.5,215.5 L1190.5,218" fill="none" stroke="#d8d8d8" stroke-width="1"/><circle cx="1184" cy="212.3" r="0.9" fill="#d8d8d8"/>
<path d="M1181.5,234.5 H1191.5 V243.5 H1181.5 Z" fill="none" stroke="#d8d8d8" stroke-width="1" stroke-dasharray="1.2 1"/><path d="M1179,233.5 H1184 M1181.5,231 V236" stroke="#d8d8d8" stroke-width="1"/>
<path d="M1175,252 H1196" stroke="#999" stroke-width="0.8" stroke-dasharray="1 1.5"/>
<path d="M1177.5,271.5 L1188.5,260.5" fill="none" stroke="#d8d8d8" stroke-width="1.2"/>
<path d="M1177.5,294.5 L1186,286" fill="none" stroke="#d8d8d8" stroke-width="1.2"/><path d="M1188.5,283.5 L1183,284.8 L1187.2,289 Z" fill="#d8d8d8"/>
<path d="M1177.5,317 Q1178.5,307.5 1188.5,306" fill="none" stroke="#d8d8d8" stroke-width="1.2"/>
<path d="M1177.5,339.5 L1179.5,335 L1182.5,336.5 L1181,332.5 L1184.5,333.5 L1188.5,328.5" fill="none" stroke="#d8d8d8" stroke-width="1.2"/>
<path d="M1177.5,356 H1188 M1177.5,353.5 V358.5 M1188,353.5 V358.5" fill="none" stroke="#d8d8d8" stroke-width="1"/><path d="M1178,356 L1180.5,354.5 V357.5 Z M1187.5,356 L1185,354.5 V357.5 Z" fill="#d8d8d8"/>
<rect x="1177.5" y="374.5" width="11" height="9" fill="none" stroke="#d8d8d8" stroke-width="1"/>
<ellipse cx="1182.8" cy="401.6" rx="5.3" ry="4.2" fill="none" stroke="#d8d8d8" stroke-width="1"/>
<path d="M1177.5,418.5 H1183 L1180.5,424 L1187.5,429.5 H1177.5 Z" fill="none" stroke="#d8d8d8" stroke-width="1"/>
<path d="M1178.5,441.5 H1191 M1178.5,441.5 V455" fill="none" stroke="#6a63b0" stroke-width="1" stroke-dasharray="1 1.6"/>
<path d="M1178.5,463.5 H1191 M1178.5,463.5 V477" fill="none" stroke="#6a63b0" stroke-width="1" stroke-dasharray="1 1.6"/>
<path d="M1178.5,485.5 H1191 M1178.5,485.5 V499" fill="none" stroke="#6a63b0" stroke-width="1" stroke-dasharray="1 1.6"/>
<path d="M1178.5,507.5 H1191 M1178.5,507.5 V521" fill="none" stroke="#6a63b0" stroke-width="1" stroke-dasharray="1 1.6"/>
<path d="M1180.5,452.5 L1181.5,447.5 L1189.5,444.5 V452.5 Z" fill="none" stroke="#e6e6e6" stroke-width="1"/><circle cx="1180.5" cy="452.5" r="1" fill="#fff"/><circle cx="1189.5" cy="444.5" r="1" fill="#fff"/><circle cx="1181.5" cy="447.5" r="0.8" fill="#fff"/><circle cx="1189.5" cy="452.5" r="0.8" fill="#fff"/>
<path d="M1180.5,474.5 L1185,468.5 H1189.5 V474.5 Z" fill="none" stroke="#e6e6e6" stroke-width="1"/>
<path d="M1180.5,491 H1189.5 M1180.5,488 V494 M1189.5,488 V494" fill="none" stroke="#e6e6e6" stroke-width="1"/><path d="M1181,491 L1183.5,489.3 V492.7 Z M1189,491 L1186.5,489.3 V492.7 Z" fill="#e6e6e6"/>
<path d="M1181.5,510 V518 M1183.5,510 V518 M1185.5,510 V518 M1187.5,510 V518 M1180,516.5 L1190,511" fill="none" stroke="#e6e6e6" stroke-width="1"/></svg>
<div class="a" id="menu">
<span style="left:11px">Revu</span><span style="left:48px">File</span><span style="left:81px">Edit</span><span style="left:114px">View</span><span style="left:149px">Document</span><span style="left:206px">Batch</span><span style="left:247px">Tools</span><span style="left:284px">Window</span><span style="left:333px">Help</span>
</div>
</body></html>
